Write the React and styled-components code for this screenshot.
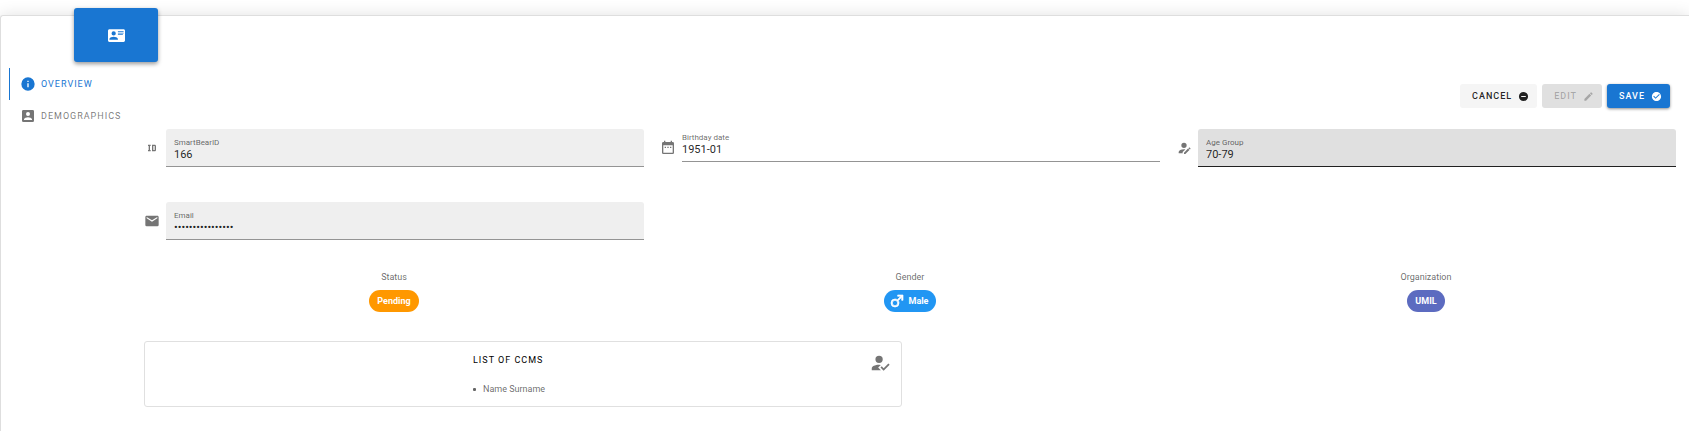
import React from "react";
import styled, { createGlobalStyle, css } from "styled-components";

const paths = {
  card: "M2,3H22C23.05,3 24,3.95 24,5V19C24,20.05 23.05,21 22,21H2C0.95,21 0,20.05 0,19V5C0,3.95 0.95,3 2,3M14,6V7H22V6H14M14,8V9H21.5L22,9V8H14M14,10V11H21V10H14M8,13.91C6,13.91 2,15 2,17V18H14V17C14,15 10,13.91 8,13.91M8,6A3,3 0 0,0 5,9A3,3 0 0,0 8,12A3,3 0 0,0 11,9A3,3 0 0,0 8,6Z",
  info: "M13,9H11V7H13M13,17H11V11H13M12,2A10,10 0 0,0 2,12A10,10 0 0,0 12,22A10,10 0 0,0 22,12A10,10 0 0,0 12,2Z",
  accountBox: "M6,17C6,15 10,13.9 12,13.9C14,13.9 18,15 18,17V18H6M15,9A3,3 0 0,1 12,12A3,3 0 0,1 9,9A3,3 0 0,1 12,6A3,3 0 0,1 15,9M3,5V19A2,2 0 0,0 5,21H19A2,2 0 0,0 21,19V5A2,2 0 0,0 19,3H5C3.89,3 3,3.9 3,5Z",
  minus: "M17,13H7V11H17M12,2A10,10 0 0,0 2,12A10,10 0 0,0 12,22A10,10 0 0,0 22,12A10,10 0 0,0 12,2Z",
  pencil: "M20.71,7.04C21.1,6.65 21.1,6 20.71,5.63L18.37,3.29C18,2.9 17.35,2.9 16.96,3.29L15.12,5.12L18.87,8.87M3,17.25V21H6.75L17.81,9.93L14.06,6.18L3,17.25Z",
  check: "M12 2C6.5 2 2 6.5 2 12S6.5 22 12 22 22 17.5 22 12 17.5 2 12 2M10 17L5 12L6.41 10.59L10 14.17L17.59 6.58L19 8L10 17Z",
  id: "M10 7V9H9V15H10V17H6V15H7V9H6V7H10M16 7C17.11 7 18 7.9 18 9V15C18 16.11 17.11 17 16 17H12V7M16 9H14V15H16V9Z",
  email: "M20,8L12,13L4,8V6L12,11L20,6M20,4H4C2.89,4 2,4.89 2,6V18A2,2 0 0,0 4,20H20A2,2 0 0,0 22,18V6C22,4.89 21.1,4 20,4Z",
  calendar: "M9,10H7V12H9V10M13,10H11V12H13V10M17,10H15V12H17V10M19,3H18V1H16V3H8V1H6V3H5C3.89,3 3,3.9 3,5V19A2,2 0 0,0 5,21H19A2,2 0 0,0 21,19V5A2,2 0 0,0 19,3M19,19H5V8H19V19Z",
  accountCheck: "M21.1,12.5L22.5,13.91L15.97,20.5L12.5,17L13.9,15.59L15.97,17.67L21.1,12.5M10,17L13,20H3V18C3,15.79 6.58,14 11,14L12.89,14.11L10,17M11,4A4,4 0 0,1 15,8A4,4 0 0,1 11,12A4,4 0 0,1 7,8A4,4 0 0,1 11,4Z",
  accountEdit: "M21.7,13.35L20.7,14.35L18.65,12.3L19.65,11.3C19.86,11.09 20.21,11.09 20.42,11.3L21.7,12.58C21.91,12.79 21.91,13.14 21.7,13.35M12,18.94L18.06,12.88L20.11,14.93L14.06,21H12V18.94M12,14C7.58,14 4,15.79 4,18V20H10V18.11L14,14.11C13.34,14.03 12.67,14 12,14M12,4A4,4 0 0,0 8,8A4,4 0 0,0 12,12A4,4 0 0,0 16,8A4,4 0 0,0 12,4Z",
  male: "M9,9C10.29,9 11.5,9.41 12.47,10.11L17.58,5H13V3H21V11H19V6.41L13.89,11.5C14.59,12.5 15,13.7 15,15A6,6 0 0,1 9,21A6,6 0 0,1 3,15A6,6 0 0,1 9,9M9,11A4,4 0 0,0 5,15A4,4 0 0,0 9,19A4,4 0 0,0 13,15A4,4 0 0,0 9,11Z",
};

const Svg = styled.svg`
  display: block;
  flex: none;
  fill: currentColor;
  stroke: ${(p) => (p.$bold ? "currentColor" : "none")};
`;

const Icon = ({ name, size = 16, bold = false }) => (
  <Svg width={size} height={size} viewBox="0 0 24 24" aria-hidden="true" $bold={bold}>
    <path d={paths[name]} />
  </Svg>
);

const GlobalStyle = createGlobalStyle`
  * { box-sizing: border-box; }
  body {
    margin: 0;
    background: #fff;
    color: rgba(0, 0, 0, 0.87);
    font-family: Roboto, "Liberation Sans", sans-serif;
    font-size: 11px;
    line-height: 16px;
    overflow-x: hidden;
  }
  button, input { font: inherit; color: inherit; margin: 0; border: 0; }
`;

const Page = styled.div`
  display: flex;
  flex-direction: column;
  min-height: 100vh;
  padding-top: 15px;
`;

const Panel = styled.section`
  flex: 1;
  border: 1px solid #dedede;
  border-width: 1px 0 0 1px;
  border-radius: 3px 0 0 0;
  box-shadow: 0 0 16px rgba(0, 0, 0, 0.12);
  padding: 0 13px 23px 8px;
`;

const Badge = styled.div`
  display: flex;
  align-items: center;
  justify-content: center;
  width: 84px;
  height: 54px;
  margin: -8px 0 6px 65px;
  border-radius: 3px;
  background: #1976d2;
  color: #fff;
  box-shadow: 0 2px 4px rgba(0, 0, 0, 0.4);
`;

const Body = styled.div`
  display: grid;
  grid-template-columns: 135px minmax(0, 1fr);
`;

const Tabs = styled.nav`
  display: flex;
  flex-direction: column;
`;

const Tab = styled.button`
  display: flex;
  align-items: center;
  gap: 5px;
  height: 32px;
  padding: 0 0 0 10px;
  border-left: 1px solid ${(p) => (p.$active ? "#1976d2" : "transparent")};
  background: none;
  color: ${(p) => (p.$active ? "#1976d2" : "rgba(0, 0, 0, 0.54)")};
  font-size: 9px;
  font-weight: 400;
  letter-spacing: 1px;
  text-transform: uppercase;
`;

const Content = styled.main`
  padding-top: 16px;
`;

const Actions = styled.div`
  display: flex;
  justify-content: flex-end;
  gap: 5px;
  padding-right: 6px;
  margin-bottom: 21px;
`;

const variants = {
  plain: css`
    background: #f5f5f5;
    color: rgba(0, 0, 0, 0.87);
  `,
  disabled: css`
    background: #e0e0e0;
    color: rgba(0, 0, 0, 0.26);
  `,
  primary: css`
    background: #1976d2;
    color: #fff;
    box-shadow: 0 1px 3px rgba(0, 0, 0, 0.45);
  `,
};

const ActionButton = styled.button`
  display: flex;
  align-items: center;
  gap: 6px;
  height: 24px;
  padding: 0 8px 0 12px;
  border-radius: 3px;
  font-size: 9px;
  font-weight: 500;
  letter-spacing: 1px;
  text-transform: uppercase;
  ${(p) => variants[p.$variant]}
`;

const Grid = styled.div`
  display: grid;
  grid-template-columns: repeat(3, minmax(0, 1fr));
  gap: 35px 16px;
`;

const FieldRow = styled.div`
  display: flex;
  align-items: center;
  align-self: start;
  gap: 6px;
  color: rgba(0, 0, 0, 0.54);
`;

const looks = {
  filled: css`
    height: 38px;
    padding: 8px 8px 0;
    background: #efefef;
    border-bottom: 1px solid #949494;
  `,
  hovered: css`
    height: 38px;
    padding: 8px 8px 0;
    background: #e0e0e0;
    border-bottom: 1px solid #212121;
  `,
  plain: css`
    height: 33px;
    padding-top: 3px;
    border-bottom: 1px solid #949494;
    border-radius: 0;
    margin-bottom: 5px;
  `,
};

const FieldBox = styled.label`
  display: flex;
  flex: 1;
  flex-direction: column;
  min-width: 0;
  border-radius: 3px 3px 0 0;
  ${(p) => looks[p.$look]}
`;

const FieldLabel = styled.span`
  color: rgba(0, 0, 0, 0.6);
  font-size: 8px;
  line-height: 11px;
`;

const FieldInput = styled.input`
  width: 100%;
  height: 14px;
  padding: 0;
  outline: 0;
  background: none;
  color: rgba(0, 0, 0, 0.87);
  font-size: 11px;
  line-height: 14px;
`;

const Field = ({ icon, label, look = "filled", ...input }) => (
  <FieldRow>
    <Icon name={icon} />
    <FieldBox $look={look}>
      <FieldLabel>{label}</FieldLabel>
      <FieldInput {...input} />
    </FieldBox>
  </FieldRow>
);

const Facts = styled(Grid)`
  margin-top: 29px;
`;

const Fact = styled.div`
  display: flex;
  flex-direction: column;
  align-items: center;
  gap: 5px;
`;

const FactLabel = styled.span`
  color: rgba(0, 0, 0, 0.6);
  font-size: 9px;
`;

const Chip = styled.span`
  display: flex;
  align-items: center;
  gap: 4px;
  height: 22px;
  padding: 0 8px 0 ${(p) => (p.$icon ? 5 : 8)}px;
  border-radius: 11px;
  background: ${(p) => p.$color};
  color: #fff;
  font-size: 9px;
  font-weight: 700;
`;

const ListCard = styled.section`
  display: grid;
  grid-template-columns: 1fr 100px 1fr;
  width: calc(50% - 8px);
  margin-top: 29px;
  padding: 10px 10px 9px;
  border: 1px solid #e0e0e0;
  border-radius: 3px;
`;

const ListBlock = styled.div`
  grid-column: 2;
`;

const ListTitle = styled.h2`
  margin: 0 0 13px;
  color: #000;
  font-size: 9px;
  font-weight: 400;
  line-height: 16px;
  letter-spacing: 1px;
  text-transform: uppercase;
`;

const List = styled.ul`
  margin: 0;
  padding: 0;
  list-style: none;
  color: rgba(0, 0, 0, 0.6);
  font-size: 9px;
`;

const ListItem = styled.li`
  display: flex;
  align-items: center;
  gap: 7px;

  &::before {
    content: "";
    width: 3px;
    height: 3px;
    border-radius: 1px;
    background: currentColor;
  }
`;

const ListIcon = styled.div`
  justify-self: end;
  color: rgba(0, 0, 0, 0.54);
`;

export default function App() {
  return (
    <>
      <GlobalStyle />
      <Page>
        <Panel>
          <Badge><Icon name="card" size={17} /></Badge>
          <Body>
            <Tabs>
              <Tab type="button" $active><Icon name="info" />Overview</Tab>
              <Tab type="button"><Icon name="accountBox" />Demographics</Tab>
            </Tabs>
            <Content>
              <Actions>
                <ActionButton type="button" $variant="plain">Cancel<Icon name="minus" size={11} /></ActionButton>
                <ActionButton type="button" $variant="disabled" disabled>Edit<Icon name="pencil" size={11} /></ActionButton>
                <ActionButton type="button" $variant="primary">Save<Icon name="check" size={11} /></ActionButton>
              </Actions>
              <Grid>
                <Field icon="id" label="SmartBearID" defaultValue="166" />
                <Field icon="calendar" label="Birthday date" look="plain" defaultValue="1951-01" />
                <Field icon="accountEdit" label="Age Group" look="hovered" defaultValue="70-79" />
                <Field icon="email" label="Email" type="password" defaultValue="name@example.com" />
              </Grid>
              <Facts>
                <Fact>
                  <FactLabel>Status</FactLabel>
                  <Chip $color="#ff9800">Pending</Chip>
                </Fact>
                <Fact>
                  <FactLabel>Gender</FactLabel>
                  <Chip $color="#2196f3" $icon><Icon name="male" bold />Male</Chip>
                </Fact>
                <Fact>
                  <FactLabel>Organization</FactLabel>
                  <Chip $color="#5c6bc0">UMIL</Chip>
                </Fact>
              </Facts>
              <ListCard>
                <ListBlock>
                  <ListTitle>List of CCMs</ListTitle>
                  <List><ListItem>Name Surname</ListItem></List>
                </ListBlock>
                <ListIcon><Icon name="accountCheck" size={22} /></ListIcon>
              </ListCard>
            </Content>
          </Body>
        </Panel>
      </Page>
    </>
  );
}
